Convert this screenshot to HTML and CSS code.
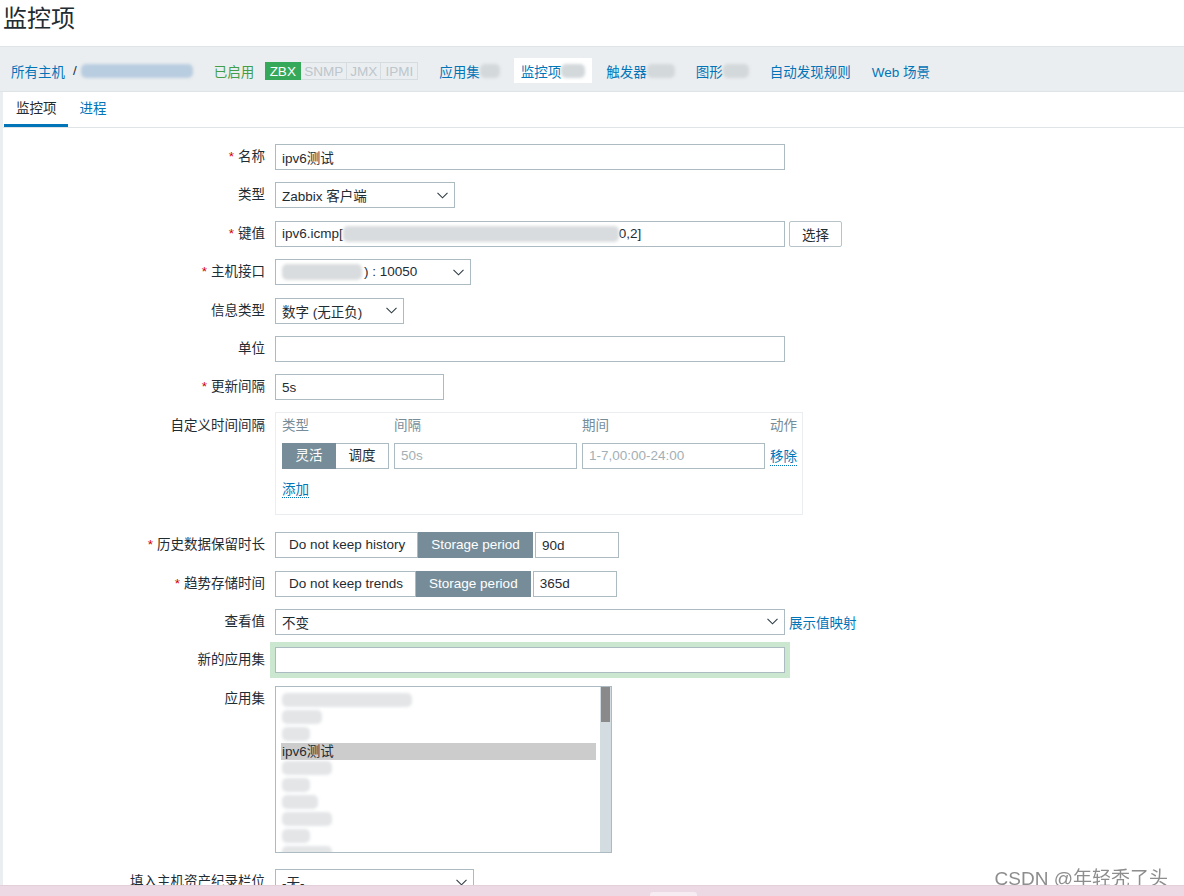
FILE: index.html
```html
<!DOCTYPE html>
<html lang="zh-CN">
<head>
<meta charset="utf-8">
<title>监控项</title>
<link rel="stylesheet" href="styles.css">
</head>
<body>
<header class="page-title"><h1>监控项</h1></header>

<nav class="host-nav">
  <ul class="nav-list">
    <li class="nav-item"><a class="lnk">所有主机</a><span class="sep">/</span><span class="blur blur-blue w-host"></span></li>
    <li class="nav-item"><span class="status-on">已启用</span>
      <span class="avail">
        <span class="av av-zbx">ZBX</span><span class="av av-snmp">SNMP</span><span class="av av-jmx">JMX</span><span class="av av-ipmi">IPMI</span>
      </span>
    </li>
    <li class="nav-item"><a class="lnk">应用集</a><span class="blur blur-grey w-cnt1"></span></li>
    <li class="nav-item nav-selected"><a class="lnk">监控项</a><span class="blur blur-grey w-cnt2"></span></li>
    <li class="nav-item"><a class="lnk">触发器</a><span class="blur blur-grey w-cnt3"></span></li>
    <li class="nav-item"><a class="lnk">图形</a><span class="blur blur-grey w-cnt4"></span></li>
    <li class="nav-item"><a class="lnk">自动发现规则</a></li>
    <li class="nav-item"><a class="lnk">Web 场景</a></li>
  </ul>
</nav>

<main class="content">
  <div class="tabs">
    <a class="tab tab-active">监控项</a>
    <a class="tab">进程</a>
  </div>

  <form class="form">
    <label class="lbl"><span class="req">*</span>名称</label>
    <div class="field"><div class="textbox w-wide">ipv6测试</div></div>

    <label class="lbl">类型</label>
    <div class="field">
      <div class="select w-type"><span>Zabbix 客户端</span><svg class="chev" viewBox="0 0 11 7"><polyline points="0.5,0.8 5.5,5.8 10.5,0.8"/></svg></div>
    </div>

    <label class="lbl"><span class="req">*</span>键值</label>
    <div class="field">
      <div class="textbox w-wide">ipv6.icmp[<span class="blur blur-in w-key"></span>0,2]</div>
      <button type="button" class="btn">选择</button>
    </div>

    <label class="lbl"><span class="req">*</span>主机接口</label>
    <div class="field">
      <div class="select w-iface"><span><span class="blur blur-in w-ip"></span>) : 10050</span><svg class="chev" viewBox="0 0 11 7"><polyline points="0.5,0.8 5.5,5.8 10.5,0.8"/></svg></div>
    </div>

    <label class="lbl">信息类型</label>
    <div class="field">
      <div class="select w-info"><span>数字 (无正负)</span><svg class="chev" viewBox="0 0 11 7"><polyline points="0.5,0.8 5.5,5.8 10.5,0.8"/></svg></div>
    </div>

    <label class="lbl">单位</label>
    <div class="field"><div class="textbox w-wide"></div></div>

    <label class="lbl"><span class="req">*</span>更新间隔</label>
    <div class="field"><div class="textbox w-upd">5s</div></div>

    <label class="lbl">自定义时间间隔</label>
    <div class="field">
      <div class="intervals">
        <div class="iv-head">类型</div>
        <div class="iv-head">间隔</div>
        <div class="iv-head">期间</div>
        <div class="iv-head">动作</div>
        <div class="toggle">
          <span class="tg tg-on">灵活</span><span class="tg">调度</span>
        </div>
        <div class="textbox iv-input placeholder">50s</div>
        <div class="textbox iv-input placeholder">1-7,00:00-24:00</div>
        <div class="iv-action"><a class="dotlink">移除</a></div>
        <div class="iv-add"><a class="dotlink">添加</a></div>
      </div>
    </div>

    <label class="lbl"><span class="req">*</span>历史数据保留时长</label>
    <div class="field">
      <div class="radio"><span class="rd">Do not keep history</span><span class="rd rd-on">Storage period</span></div>
      <div class="textbox w-keep">90d</div>
    </div>

    <label class="lbl"><span class="req">*</span>趋势存储时间</label>
    <div class="field">
      <div class="radio"><span class="rd">Do not keep trends</span><span class="rd rd-on">Storage period</span></div>
      <div class="textbox w-keep">365d</div>
    </div>

    <label class="lbl">查看值</label>
    <div class="field">
      <div class="select w-wide"><span>不变</span><svg class="chev" viewBox="0 0 11 7"><polyline points="0.5,0.8 5.5,5.8 10.5,0.8"/></svg></div>
      <a class="lnk side-link">展示值映射</a>
    </div>

    <label class="lbl">新的应用集</label>
    <div class="field"><div class="textbox w-wide focused"></div></div>

    <label class="lbl">应用集</label>
    <div class="field">
      <div class="listbox">
        <div class="options">
          <div class="opt"><span class="blur blur-list w-o1"></span></div>
          <div class="opt"><span class="blur blur-list w-o2"></span></div>
          <div class="opt"><span class="blur blur-list w-o3"></span></div>
          <div class="opt opt-sel">ipv6测试</div>
          <div class="opt"><span class="blur blur-list w-o4"></span></div>
          <div class="opt"><span class="blur blur-list w-o3"></span></div>
          <div class="opt"><span class="blur blur-list w-o5"></span></div>
          <div class="opt"><span class="blur blur-list w-o4"></span></div>
          <div class="opt"><span class="blur blur-list w-o3"></span></div>
          <div class="opt"><span class="blur blur-list w-o4"></span></div>
        </div>
        <div class="scrollbar"><div class="thumb"></div></div>
      </div>
    </div>

    <label class="lbl">填入主机资产纪录栏位</label>
    <div class="field">
      <div class="select w-inv"><span>-无-</span><svg class="chev" viewBox="0 0 11 7"><polyline points="0.5,0.8 5.5,5.8 10.5,0.8"/></svg></div>
    </div>
  </form>
</main>

<div class="watermark">CSDN @年轻秃了头</div>
<div class="taskbar"><span class="tb-tab"></span></div>
</body>
</html>
```

FILE: styles.css
```css
html, body {
  margin: 0;
  padding: 0;
}
body {
  width: 1184px;
  height: 896px;
  overflow: hidden;
  background: #ffffff;
  color: #1f2c33;
  font-family: "Liberation Sans", "Noto Sans CJK SC", sans-serif;
  font-size: 13.5px;
}
a { text-decoration: none; }

.page-title { height: 46px; }
.page-title h1 {
  margin: 0;
  padding-left: 3px;
  font-size: 24px;
  font-weight: normal;
  line-height: 38px;
  color: #1f2c33;
}

/* host navigation */
.host-nav {
  height: 46px;
  box-sizing: border-box;
  background: #ebeef0;
  border-top: 1px solid #dfe4e7;
  border-bottom: 1px solid #dfe4e7;
  padding-top: 11px;
}
.nav-list {
  list-style: none;
  margin: 0;
  padding: 0 0 0 4px;
  display: flex;
  gap: 7px;
}
.nav-item {
  height: 25px;
  display: flex;
  align-items: center;
  padding: 0 7px;
  white-space: nowrap;
}
.nav-selected { background: #ffffff; }
.lnk { color: #0275b8; }
.sep { color: #1f2c33; margin: 0 4px 0 8px; }
.status-on { color: #429e47; }
.avail { display: flex; margin-left: 11px; }
.av {
  height: 18px;
  line-height: 17px;
  box-sizing: border-box;
  border: 1px solid #d6dde1;
  border-left: none;
  color: #bcc6cc;
  text-align: center;
}
.av-zbx {
  width: 36px;
  background: #36a85a;
  border-color: #36a85a;
  color: #ffffff;
}
.av-snmp { width: 46px; }
.av-jmx { width: 34px; }
.av-ipmi { width: 37px; }

/* blurred redactions */
.blur {
  display: inline-block;
  height: 14px;
  border-radius: 5px;
  filter: blur(1.6px);
  vertical-align: middle;
}
.blur-blue { background: #b9cde0; }
.blur-grey { background: #d3d8db; }
.blur-in { background: #d9dcde; height: 16px; }
.blur-list { background: #e3e5e7; height: 14px; }
.w-host { width: 112px; }
.w-cnt1 { width: 20px; }
.w-cnt2 { width: 24px; }
.w-cnt3 { width: 28px; }
.w-cnt4 { width: 26px; }
.w-key { width: 276px; }
.w-ip { width: 80px; margin-right: 2px; }
.w-o1 { width: 130px; }
.w-o2 { width: 40px; }
.w-o3 { width: 28px; }
.w-o4 { width: 50px; }
.w-o5 { width: 36px; }

/* content */
.content {
  border-left: 3px solid #ebeef0;
  min-height: 800px;
}
.tabs {
  display: flex;
  padding-left: 1px;
  border-bottom: 1px solid #dfe4e7;
}
.tab {
  display: block;
  padding: 0 11px 0 12px;
  line-height: 33px;
  height: 32px;
  border-bottom: 3px solid transparent;
  color: #0275b8;
}
.tab-active {
  color: #1f2c33;
  border-bottom-color: #0275b8;
}

.form {
  display: grid;
  grid-template-columns: 262px 1fr;
  column-gap: 10px;
  row-gap: 12.4px;
  padding-top: 16px;
  align-items: start;
}
.lbl {
  text-align: right;
  line-height: 26px;
  white-space: nowrap;
}
.req { color: #d40000; margin-right: 4px; }
.field {
  display: flex;
  align-items: center;
  gap: 4px;
}

.textbox, .select {
  height: 26px;
  box-sizing: border-box;
  border: 1px solid #acbbc2;
  background: #ffffff;
  padding: 0 6px;
  display: flex;
  align-items: center;
  white-space: nowrap;
  overflow: hidden;
}
.select {
  justify-content: space-between;
  padding-right: 6px;
}
.chev {
  width: 11px;
  height: 7px;
  fill: none;
  stroke: #2f3d44;
  stroke-width: 1.1;
  flex: none;
}
.w-wide { width: 510px; }
.w-type { width: 180px; }
.w-iface { width: 196px; }
.w-info { width: 129px; }
.w-upd { width: 169px; }
.w-keep { width: 84px; }
.w-inv { width: 199px; }
.focused { box-shadow: 0 0 0 5px #cce7d0; }

.btn {
  height: 26px;
  box-sizing: border-box;
  padding: 0 12px;
  border: 1px solid #b7c3c9;
  border-radius: 2px;
  background: #ffffff;
  color: #1f2c33;
  font: inherit;
}
.side-link { margin-left: 0; }

/* custom intervals */
.intervals {
  width: 528px;
  height: 103px;
  box-sizing: border-box;
  border: 1px solid #ebeef0;
  padding: 4px 5px 0 6px;
  display: grid;
  grid-template-columns: 107px 183px 183px 1fr;
  grid-template-rows: 18px 26px 18px;
  column-gap: 5px;
  row-gap: 8px;
  margin-bottom: 5px;
  margin-top: -1px;
}
.iv-head {
  color: #768d99;
  line-height: 18px;
}
.toggle { display: flex; }
.tg {
  height: 26px;
  box-sizing: border-box;
  line-height: 24px;
  padding: 0 11px;
  border: 1px solid #acbbc2;
  background: #ffffff;
  width: 54px;
  text-align: center;
}
.tg + .tg { border-left: none; width: 53px; }
.tg-on {
  background: #768d99;
  border-color: #768d99;
  color: #ffffff;
}
.iv-input { width: 183px; }
.placeholder { color: #a3afb5; }
.iv-action { display: flex; align-items: center; }
.iv-add {
  grid-column: 1 / 5;
  line-height: 18px;
  margin-top: 4px;
}
.dotlink {
  color: #0275b8;
  border-bottom: 1px dotted #0275b8;
}

/* radio segmented */
.radio { display: flex; margin-right: -2px; }
.rd {
  height: 26px;
  box-sizing: border-box;
  line-height: 24px;
  padding: 0 12px 0 13px;
  border: 1px solid #acbbc2;
  background: #ffffff;
  white-space: nowrap;
}
.rd + .rd { border-left: none; }
.rd-on {
  background: #768d99;
  border-color: #768d99;
  color: #ffffff;
}

/* listbox */
.listbox {
  width: 337px;
  height: 167px;
  box-sizing: border-box;
  border: 1px solid #acbbc2;
  display: flex;
  margin-bottom: 4px;
  overflow: hidden;
}
.options {
  flex: 1;
  padding: 5px 4px 0 5px;
}
.opt {
  height: 17px;
  line-height: 17px;
  padding-left: 1px;
  display: flex;
  align-items: center;
}
.opt-sel { background: #cccccc; }
.scrollbar {
  width: 11px;
  background: #d3dce1;
  flex: none;
}
.thumb {
  height: 35px;
  background: #8a8a8a;
  margin: 0 1px;
}

/* overlays */
.watermark {
  position: fixed;
  right: 16px;
  bottom: 6px;
  font-size: 19px;
  line-height: 22px;
  color: #8d8d8d;
  text-shadow: 0 0 2px #ffffff, 0 0 1px #ffffff;
  font-family: "Liberation Sans", "Noto Sans CJK SC", sans-serif;
}
.taskbar {
  position: fixed;
  left: 0;
  right: 0;
  bottom: 0;
  height: 10px;
  background: #edd9e4;
  border-top: 1px solid #e3cfda;
}
.tb-tab {
  position: absolute;
  left: 650px;
  top: 6px;
  width: 47px;
  height: 4px;
  border-radius: 3px 3px 0 0;
  background: #f6ecf1;
}
```
